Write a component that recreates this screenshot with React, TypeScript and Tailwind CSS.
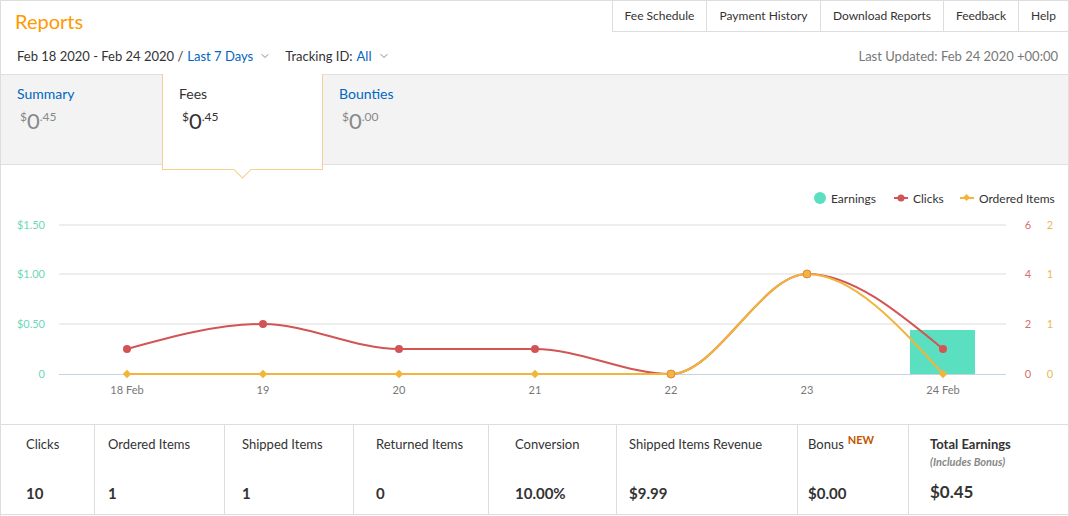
import { ChevronDown } from "lucide-react"

const navItems = [
  { label: "Fee Schedule", w: "w-[94px]" },
  { label: "Payment History", w: "w-[114px]" },
  { label: "Download Reports", w: "w-[123px]" },
  { label: "Feedback", w: "w-[75px]" },
  { label: "Help", w: "w-[49px]" },
]

const stats = [
  { label: "Clicks", value: "10", cls: "w-[94px] pl-[25px]" },
  { label: "Ordered Items", value: "1", cls: "w-[130px] pl-[13px]" },
  { label: "Shipped Items", value: "1", cls: "w-[129px] pl-[17px]" },
  { label: "Returned Items", value: "0", cls: "w-[135px] pl-[22px]" },
  { label: "Conversion", value: "10.00%", cls: "w-[128px] pl-[26px]" },
  { label: "Shipped Items Revenue", value: "$9.99", cls: "w-[181px] pl-[12px]" },
  { label: "Bonus", value: "$0.00", cls: "w-[111px] pl-[10px]", isNew: true },
]

const xs = [126, 262, 398, 534, 670, 806, 942]
const labels = ["18 Feb", "19", "20", "21", "22", "23", "24 Feb"]
const clicks = [184, 159, 184, 184, 209, 109, 184]
const ordered = [209, 209, 209, 209, 209, 109, 209]

// monotone cubic, same idea as d3 curveMonotoneX
function smoothPath(px: number[], py: number[]) {
  const n = px.length
  const s: number[] = []
  for (let i = 0; i < n - 1; i++) s.push((py[i + 1] - py[i]) / (px[i + 1] - px[i]))
  const t: number[] = new Array(n).fill(0)
  for (let i = 1; i < n - 1; i++) {
    const h0 = px[i] - px[i - 1]
    const h1 = px[i + 1] - px[i]
    const s0 = s[i - 1]
    const s1 = s[i]
    if (s0 * s1 <= 0) {
      t[i] = 0
    } else {
      const p = (s0 * h1 + s1 * h0) / (h0 + h1)
      t[i] = (Math.sign(s0) + Math.sign(s1)) * Math.min(Math.abs(s0), Math.abs(s1), 0.5 * Math.abs(p))
    }
  }
  t[0] = (3 * s[0] - t[1]) / 2
  t[n - 1] = (3 * s[n - 2] - t[n - 2]) / 2
  let d = `M${px[0]},${py[0]}`
  for (let i = 0; i < n - 1; i++) {
    const h = (px[i + 1] - px[i]) / 3
    d += ` C${px[i] + h},${py[i] + t[i] * h} ${px[i + 1] - h},${py[i + 1] - t[i + 1] * h} ${px[i + 1]},${py[i + 1]}`
  }
  return d
}

const Amount = ({ cents, active }: { cents: string; active?: boolean }) => (
  <div className={`flex items-start mt-[4px] ${active ? "text-[#333]" : "text-[#888]"}`}>
    <span className="text-[12px] leading-none mt-[3px]">$</span>
    <span className="text-[22px] leading-[26px]">0</span>
    <span className="text-[12px] leading-none mt-[3px]">.{cents}</span>
  </div>
)

function Chart() {
  const red = "#d25454"
  const orange = "#f2b43a"
  const teal = "#5ae0c1"
  return (
    <svg width="1067" height="259" className="block" style={{ fontFamily: "Lato, sans-serif" }}>
      {/* legend */}
      <circle cx="819" cy="33" r="6" fill={teal} />
      <text x="830" y="37.5" fontSize="12" fill="#333">Earnings</text>
      <line x1="893" y1="33" x2="907" y2="33" stroke={red} strokeWidth="2" />
      <circle cx="900" cy="33" r="3.5" fill={red} />
      <text x="912" y="37.5" fontSize="12" fill="#333">Clicks</text>
      <line x1="959" y1="33" x2="973" y2="33" stroke={orange} strokeWidth="2" />
      <rect x="963" y="30" width="5" height="5" fill={orange} transform="rotate(45 965.5 32.5)" />
      <text x="978" y="37.5" fontSize="12" fill="#333">Ordered Items</text>

      {/* grid */}
      {[60, 109, 159].map(y => (
        <line key={y} x1="58" y1={y} x2="1005" y2={y} stroke="#dcdcdc" />
      ))}
      <line x1="58" y1="209.5" x2="1005" y2="209.5" stroke="#c3d3e0" />

      {/* left axis */}
      {[["$1.50", 60], ["$1.00", 109], ["$0.50", 159], ["0", 209]].map(([l, y]) => (
        <text key={l} x="44" y={Number(y) + 4} fontSize="11" fill="#6dd7ba" textAnchor="end">{l}</text>
      ))}
      {/* right axes */}
      {[["6", 60], ["4", 109], ["2", 159], ["0", 209]].map(([l, y]) => (
        <text key={"r" + y} x="1027" y={Number(y) + 4} fontSize="11" fill="#d46f6f" textAnchor="middle">{l}</text>
      ))}
      {[["2", 60], ["1", 109], ["1", 159], ["0", 209]].map(([l, y]) => (
        <text key={"o" + y} x="1049" y={Number(y) + 4} fontSize="11" fill="#e9b75a" textAnchor="middle">{l}</text>
      ))}

      {/* x labels */}
      {xs.map((x, i) => (
        <text key={x} x={x} y="229" fontSize="11" fill="#777" textAnchor="middle">{labels[i]}</text>
      ))}

      {/* earnings bar */}
      <rect x="909" y="165" width="65" height="44" fill={teal} />

      <path d={smoothPath(xs, clicks)} fill="none" stroke={red} strokeWidth="2" />
      <path d={smoothPath(xs, ordered)} fill="none" stroke={orange} strokeWidth="2" />
      {xs.map((x, i) => (
        <circle key={"c" + x} cx={x} cy={clicks[i]} r="4" fill={red} />
      ))}
      {xs.map((x, i) =>
        ordered[i] < 209 || i === 4 ? (
          <circle key={"o" + x} cx={x} cy={ordered[i]} r="4" fill={orange} stroke="#e08a4a" strokeWidth="1" />
        ) : (
          <rect key={"o" + x} x={x - 3} y={ordered[i] - 3} width="6" height="6" fill={orange} transform={`rotate(45 ${x} ${ordered[i]})`} />
        )
      )}
    </svg>
  )
}

export default function App() {
  return (
    <div className="w-[1069px] h-[516px] overflow-hidden bg-white border-x border-t border-[#ddd] text-[#333] font-['Lato',sans-serif]">
      {/* header */}
      <div className="flex justify-between">
        <div className="pl-[14px] pt-2 text-[20px] leading-6 text-[#f90]">Reports</div>
        <div className="flex h-[31px] border-l border-b border-[#ddd]">
          {navItems.map((n, i) => (
            <div
              key={n.label}
              className={`${n.w} flex items-center justify-center text-[12px] text-[#333] ${i < navItems.length - 1 ? "border-r border-[#ddd]" : ""}`}
            >
              {n.label}
            </div>
          ))}
        </div>
      </div>
      <div className="flex justify-between items-center pl-4 pr-[10px] pt-[13px] pb-[8px] text-[13px] leading-5">
        <div className="flex items-center">
          <span>Feb 18 2020 - Feb 24 2020 /</span>
          <span className="ml-1 text-[#0066c0]">Last 7 Days</span>
          <ChevronDown size={12} className="ml-[6px] text-[#888]" />
          <span className="ml-[14px]">Tracking ID:</span>
          <span className="ml-1 text-[#0066c0]">All</span>
          <ChevronDown size={12} className="ml-[6px] text-[#888]" />
        </div>
        <div className="text-[#777]">Last Updated: Feb 24 2020 +00:00</div>
      </div>

      {/* tabs band */}
      <div className="flex h-[91px] bg-[#f3f3f3] border-t border-b border-[#e0e0e0]">
        <div className="w-[161px] pl-4 pt-[9px]">
          <div className="text-[14px] leading-5 text-[#0066c0]">Summary</div>
          <div className="pl-[3px]"><Amount cents="45" /></div>
        </div>
        <div className="relative z-10 -mt-px w-[161px] h-[96px] bg-white border-x border-b border-[#f5d08e] pl-4 pt-[10px]">
          <div className="text-[14px] leading-5 text-[#333]">Fees</div>
          <div className="pl-[3px]"><Amount cents="45" active /></div>
          <div className="absolute left-[73px] -bottom-[7px] w-[13px] h-[13px] rotate-45 bg-white border-r border-b border-[#f5d08e]" />
        </div>
        <div className="w-[161px] pl-4 pt-[9px]">
          <div className="text-[14px] leading-5 text-[#0066c0]">Bounties</div>
          <div className="pl-[3px]"><Amount cents="00" /></div>
        </div>
      </div>

      <Chart />

      {/* stats */}
      <div className="flex h-[91px] border-t border-b border-[#ddd]">
        {stats.map(s => (
          <div key={s.label} className={`${s.cls} flex flex-col pt-[9px] border-r border-[#ddd]`}>
            <div className="text-[13px] leading-5">
              {s.label}
              {s.isNew && <span className="ml-1 align-top text-[11px] font-bold text-[#c45500] leading-none">NEW</span>}
            </div>
            <div className="mt-auto mb-[11px] text-[15px] leading-5 font-bold">{s.value}</div>
          </div>
        ))}
        <div className="flex-1 flex flex-col pt-[9px] pl-[21px]">
          <div className="text-[13px] leading-5 font-bold">Total Earnings</div>
          <div className="text-[11px] leading-4 italic font-bold text-[#888]">(Includes Bonus)</div>
          <div className="mt-auto mb-[12px] text-[17px] leading-5 font-bold">$0.45</div>
        </div>
      </div>
    </div>
  )
}
